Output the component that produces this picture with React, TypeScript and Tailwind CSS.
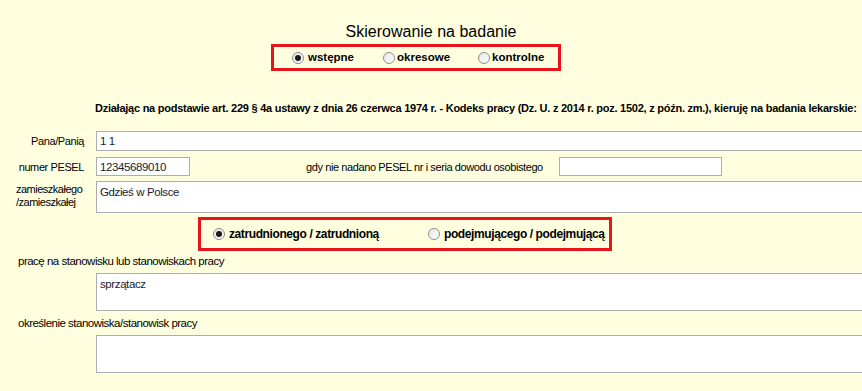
import React from "react";

// radio dot drawn like the classic Windows control
function Radio({ checked }: { checked?: boolean }) {
  return (
    <span className="relative inline-flex h-[12px] w-[12px] shrink-0 items-center justify-center rounded-full border border-[#8e8f8f] bg-gradient-to-br from-[#e6e6e6] to-white">
      {checked && <span className="h-[6px] w-[6px] rounded-full bg-[#1a1a1a]" />}
    </span>
  );
}

function Field({ value, className }: { value?: string; className: string }) {
  return (
    <div
      className={`border border-[#abadb3] bg-white pl-[3px] text-[11.5px] leading-[16px] tracking-[-0.4px] text-[#1b1b2e] ${className}`}
    >
      {value}
    </div>
  );
}

export default function App() {
  return (
    <div className="h-[391px] w-[862px] overflow-hidden bg-[#ffffe0] font-['Liberation_Sans',Arial,sans-serif] text-black">
      {/* title */}
      <h1 className="pt-[23px] text-center text-[16px] leading-[18px] font-normal">
        Skierowanie na badanie
      </h1>

      {/* type of examination */}
      <div className="ml-[271px] mt-[3px] flex h-[27px] w-[290px] items-center border-[3px] border-[#e8141c] pl-[18px] text-[11.5px] font-bold">
        <label className="flex w-[91px] shrink-0 items-center gap-[4px]">
          <Radio checked />
          wstępne
        </label>
        <label className="flex w-[95px] shrink-0 items-center gap-[2px]">
          <Radio />
          okresowe
        </label>
        <label className="flex shrink-0 items-center gap-[2px]">
          <Radio />
          kontrolne
        </label>
      </div>

      <p className="ml-[95px] mt-[30px] whitespace-nowrap text-[11px] leading-[14px] font-bold tracking-[-0.25px]">
        Działając na podstawie art. 229 § 4a ustawy z dnia 26 czerwca 1974 r. - Kodeks pracy (Dz. U. z 2014 r. poz. 1502, z późn. zm.), kieruję na badania lekarskie:
      </p>

      <div className="text-[11px] leading-[14px] tracking-[-0.4px]">
        <div className="mt-[16px] flex items-center">
          <span className="w-[84px] shrink-0 text-right">Pana/Panią</span>
          <Field value="1 1" className="ml-[12px] h-[20px] w-[800px] shrink-0 pt-[1px]" />
        </div>

        <div className="mt-[6px] flex items-center">
          <span className="w-[84px] shrink-0 text-right">numer PESEL</span>
          <Field value="12345689010" className="ml-[12px] h-[19px] w-[94px] shrink-0 pt-[1px]" />
          <span className="ml-[116px] w-[241px] shrink-0 whitespace-nowrap">
            gdy nie nadano PESEL nr i seria dowodu osobistego
          </span>
          <Field className="ml-[12px] h-[19px] w-[163px] shrink-0" />
        </div>

        <div className="mt-[5px] flex items-start">
          <span className="ml-[16px] mt-[2px] w-[68px] shrink-0 leading-[13px] tracking-[-0.5px]">
            zamieszkałego /zamieszkałej
          </span>
          <Field value="Gdzieś w Polsce" className="ml-[12px] h-[32px] w-[800px] shrink-0 pt-[2px]" />
        </div>

        {/* employment status */}
        <div className="ml-[198px] mt-[4px] flex h-[34px] w-[414px] items-center border-[3px] border-[#e8141c] pl-[12px] text-[12px] font-bold tracking-[-0.4px]">
          <label className="flex w-[215px] shrink-0 items-center gap-[4px] whitespace-nowrap">
            <Radio checked />
            zatrudnionego / zatrudnioną
          </label>
          <label className="flex shrink-0 items-center gap-[4px] whitespace-nowrap">
            <Radio />
            podejmującego / podejmującą
          </label>
        </div>

        <p className="ml-[18px] mt-[3px] text-[11.5px] tracking-[-0.5px]">pracę na stanowisku lub stanowiskach pracy</p>
        <Field value="sprzątacz" className="ml-[96px] mt-[5px] h-[38px] w-[800px] pt-[2px]" />

        <p className="ml-[18px] mt-[5px] text-[11.5px] tracking-[-0.5px]">określenie stanowiska/stanowisk pracy</p>
        <Field className="ml-[96px] mt-[5px] h-[38px] w-[800px]" />
      </div>
    </div>
  );
}
